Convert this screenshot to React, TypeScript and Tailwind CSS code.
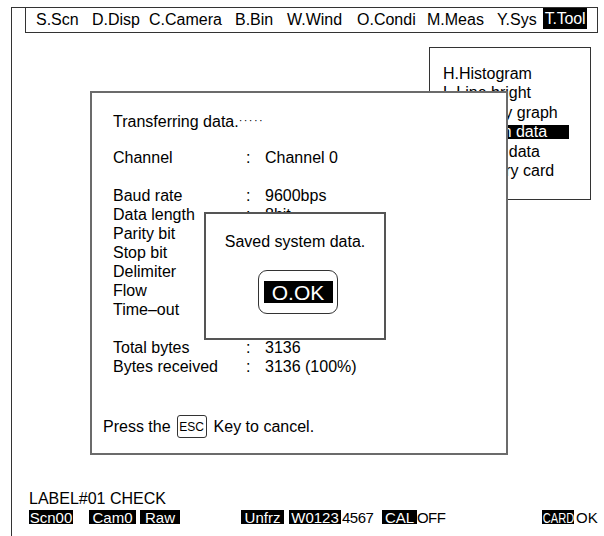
import React from 'react';

const menuItems = [
  { label: 'S.Scn', w: 'w-[56px]' },
  { label: 'D.Disp', w: 'w-[57px]' },
  { label: 'C.Camera', w: 'w-[86px]' },
  { label: 'B.Bin', w: 'w-[52px]' },
  { label: 'W.Wind', w: 'w-[70px]' },
  { label: 'O.Condi', w: 'w-[70px]' },
  { label: 'M.Meas', w: 'w-[70px]' },
  { label: 'Y.Sys', w: 'w-[46px]' },
];

const toolItems = [
  'H.Histogram',
  'L.Line bright',
  'D.Density graph',
  'S.System data',
  'C.Scene data',
  'M.Memory card',
];

const settings = [
  { label: 'Baud rate', value: '9600bps' },
  { label: 'Data length', value: '8bit' },
  { label: 'Parity bit', value: 'None' },
  { label: 'Stop bit', value: '1bit' },
  { label: 'Delimiter', value: 'CR' },
  { label: 'Flow', value: 'None' },
  { label: 'Time\u2013out', value: '5s' },
];

const Row: React.FC<{ label: string; value: string }> = ({ label, value }) => (
  <div className="grid grid-cols-[133px_19px_1fr] h-[19px] leading-[19px]">
    <span>{label}</span>
    <span>:</span>
    <span>{value}</span>
  </div>
);

// black status tags along the bottom line
const tag = 'inline-block h-[14px] leading-[15px] bg-black text-white text-center';

const App: React.FC = () => {
  return (
    <div className="relative w-[604px] h-[536px] bg-white overflow-hidden text-black text-[16px] font-['Liberation_Sans',Arial,sans-serif]">
      {/* screen frame */}
      <div className="pt-[7px] pl-[11px] h-full">
        <div className="w-[587px] h-full border-l border-t border-[#333] flex flex-col">
          {/* menu bar */}
          <div className="ml-[13px] h-[25px] border-x border-b border-[#333] flex items-start pl-[10px] pt-[1px]">
            {menuItems.map((m) => (
              <span key={m.label} className={`${m.w} h-[20px] leading-[21px] whitespace-nowrap`}>
                {m.label}
              </span>
            ))}
            <span className="w-[44px] h-[21px] leading-[21px] -mt-[1px] bg-black text-white text-center whitespace-nowrap tracking-[-0.2px]">
              T.Tool
            </span>
          </div>

          {/* status */}
          <div className="mt-auto pl-[17px] pb-[11px]">
            <div className="h-[19px] leading-[19px]">LABEL#01 CHECK</div>
            <div className="flex items-center h-[17px] whitespace-nowrap text-[15px]">
              <span className={`${tag} w-[44px]`}>Scn00</span>
              <span className={`${tag} w-[47px] ml-[16px]`}>Cam0</span>
              <span className={`${tag} w-[40px] ml-[4px]`}>Raw</span>
              <span className={`${tag} w-[43px] ml-[61px]`}>Unfrz</span>
              <span className={`${tag} w-[52px] ml-[5px]`}>W0123</span>
              <span className="inline-block h-[14px] leading-[15px] w-[41px] pl-[1px] tracking-[-0.5px]">4567</span>
              <span className={`${tag} w-[35px]`}>CAL</span>
              <span className="inline-block h-[14px] leading-[15px] w-[125px] tracking-[-0.6px]">OFF</span>
              <span className={`${tag} w-[32px] text-left`}>
                <span className="inline-block origin-left scale-x-[0.74] pl-[1px]">CARD</span>
              </span>
              <span className="inline-block h-[14px] leading-[15px] ml-[2px]">OK</span>
            </div>
          </div>
        </div>
      </div>

      {/* tool pull-down */}
      <div className="absolute left-[429px] top-[47px] w-[162px] h-[153px] border border-[#333] bg-white pt-[16px] pl-[13px]">
        {toolItems.map((t, i) => (
          <div key={t} className="h-[19.5px] flex items-center">
            <span
              className={`inline-block w-[126px] h-[14px] leading-[14px] whitespace-nowrap ${
                i === 3 ? 'bg-black text-white' : ''
              }`}
            >
              {t}
            </span>
          </div>
        ))}
      </div>

      {/* transfer dialog */}
      <div className="absolute left-[90px] top-[91px] w-[418px] h-[364px] border-2 border-[#6b6b6b] bg-white pt-[18px] pl-[21px]">
        <div className="h-[19px] leading-[19px] whitespace-nowrap">
          Transferring data.
          <span className="text-[11px] tracking-[1.4px] align-[3px]">·····</span>
        </div>
        <div className="h-[18px]" />
        <Row label="Channel" value="Channel 0" />
        <div className="h-[19px]" />
        {settings.map((s) => (
          <Row key={s.label} label={s.label} value={s.value} />
        ))}
        <div className="h-[19px]" />
        <Row label="Total bytes" value="3136" />
        <Row label="Bytes received" value="3136 (100%)" />
        <div className="flex items-center h-[23px] mt-[39px] -ml-[10px] whitespace-nowrap">
          <span>Press the</span>
          <span className="ml-[6px] w-[30px] h-[23px] border border-[#333] rounded-[3px] text-[12px] flex items-center justify-center">
            ESC
          </span>
          <span className="ml-[7px]">Key to cancel.</span>
        </div>

        {/* saved message */}
        <div className="absolute left-[112px] top-[119px] w-[182px] h-[128px] border-2 border-[#555] bg-white flex flex-col items-center pt-[18px]">
          <div className="h-[19px] leading-[19px] whitespace-nowrap">Saved system data.</div>
          <div className="mt-[19px] ml-[6px] w-[80px] h-[44px] border-[1.5px] border-[#333] rounded-[9px] flex items-center justify-center">
            <span className="w-[69px] h-[22px] leading-[23px] bg-black text-white text-[21px] text-center">O.OK</span>
          </div>
        </div>
      </div>
    </div>
  );
};

export default App;
